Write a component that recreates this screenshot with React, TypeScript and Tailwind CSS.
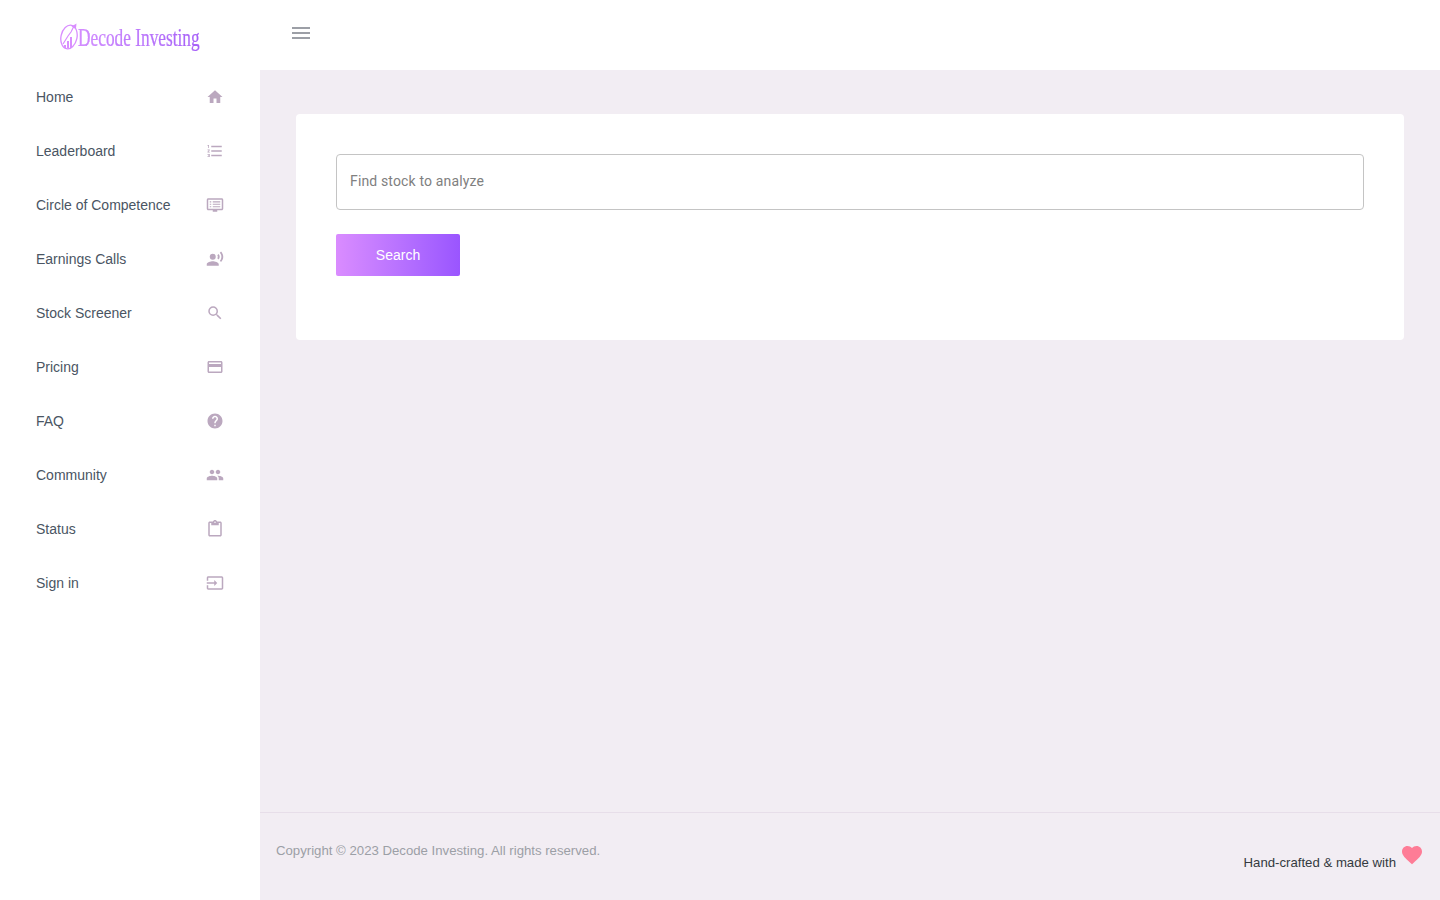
import React from "react";
import {
  MdHome, MdFormatListNumbered, MdRecordVoiceOver, MdSearch, MdCreditCard, MdHelp, MdPeople,
  MdContentPaste, MdInput, MdFavorite, MdMenu,
} from "react-icons/md";

function Monitor({ className }: { className?: string }) {
  return (
    <svg viewBox="0 0 24 24" className={className} fill="currentColor">
      <path d="M21 3H3c-1.100 0-2 .9-2 2v12c0 1.100.9 2 2 2h6v2h6v-2h6c1.100 0 2-.9 2-2V5c0-1.100-.9-2-2-2zm0 14H3V5h18v12z" />
      <path d="M5 7h2v1.500H5zM5 10.250h2v1.500H5zM5 13.500h2v1.500H5zM9 7h10v1.500H9zM9 10.250h10v1.500H9zM9 13.500h10v1.500H9z" />
    </svg>
  );
}

function Logo() {
  return (
    <div className="flex h-[32px] items-start">
      <svg width="22" height="32" viewBox="0 0 22 32" className="block shrink-0">
        <ellipse cx="13" cy="15" rx="8" ry="12" fill="none" stroke="#d98eff" strokeWidth="1.3" transform="rotate(12 13 15)" />
        <path d="M7 22l5-8 3-4 3-6" fill="none" stroke="#d98eff" strokeWidth="1.2" />
        <path d="M15.500 4.500l5-3-.6 5.500z" fill="#d98eff" />
        <path d="M8 26v-3h2v3zM11 26v-7h2v7zM14 26v-11h2v11z" fill="#d98eff" />
      </svg>
      <span className="inline-block origin-left scale-x-[0.666] whitespace-nowrap bg-gradient-to-r from-[#d58cff] to-[#a45ff7] bg-clip-text font-['Liberation_Serif',serif] text-[26px] leading-[32px] text-transparent [-webkit-text-stroke:0.2px_#b878fb]">
        Decode Investing
      </span>
    </div>
  );
}

const items: [string, React.ComponentType<{ className?: string }>][] = [
  ["Home", MdHome],
  ["Leaderboard", MdFormatListNumbered],
  ["Circle of Competence", Monitor],
  ["Earnings Calls", MdRecordVoiceOver],
  ["Stock Screener", MdSearch],
  ["Pricing", MdCreditCard],
  ["FAQ", MdHelp],
  ["Community", MdPeople],
  ["Status", MdContentPaste],
  ["Sign in", MdInput],
];

export default function App() {
  return (
    <div className="flex h-screen w-full overflow-hidden bg-white font-['Liberation_Sans',sans-serif]">
      <aside className="flex w-[260px] shrink-0 flex-col bg-white">
        <div className="flex h-[70px] items-center pl-[56px] pt-[6px]">
          <Logo />
        </div>
        <nav className="flex flex-col">
          {items.map(([label, Icon]) => (
            <a key={label} className="flex h-[54px] items-center justify-between pl-[36px] pr-[36px] text-[14px] text-[#4a5563]">
              <span>{label}</span>
              <Icon className="h-[18px] w-[18px] text-[#bba8bf]" />
            </a>
          ))}
        </nav>
      </aside>
      <div className="flex min-w-0 flex-1 flex-col">
        <header className="flex h-[70px] shrink-0 items-center bg-white pl-[29px] pb-[4px]">
          <MdMenu className="h-[24px] w-[24px] text-[#9c9fa6]" />
        </header>
        <main className="flex flex-1 flex-col bg-[#f2edf3]">
          <div className="flex-1 px-[36px] pt-[44px]">
            <div className="h-[226px] rounded bg-white p-[40px]">
              <div className="flex h-[56px] items-center rounded border border-[#c4c4c4] px-[13px] pb-[2px] font-['Roboto',sans-serif] text-[14px] tracking-[0.15px] text-[#808080]">
                Find stock to analyze
              </div>
              <button className="mt-[24px] h-[42px] w-[124px] rounded-[2px] bg-gradient-to-r from-[#da8cff] to-[#9a55ff] text-[14px] text-white">
                Search
              </button>
            </div>
          </div>
          <footer className="relative flex h-[88px] shrink-0 border-t border-[#e7dee9] pl-[16px] pt-[30px] text-[13.2px] text-[#9c9fa6]">
            <span className="leading-[16px]">Copyright © 2023 Decode Investing. All rights reserved.</span>
            <div className="absolute right-[16px] top-[30px] flex items-start text-[#343a40]">
              <span className="mt-[12px] leading-[16px]">Hand-crafted &amp; made with</span>
              <MdFavorite className="ml-[4px] h-[24px] w-[24px] text-[#fe7c96]" />
            </div>
          </footer>
        </main>
      </div>
    </div>
  );
}
